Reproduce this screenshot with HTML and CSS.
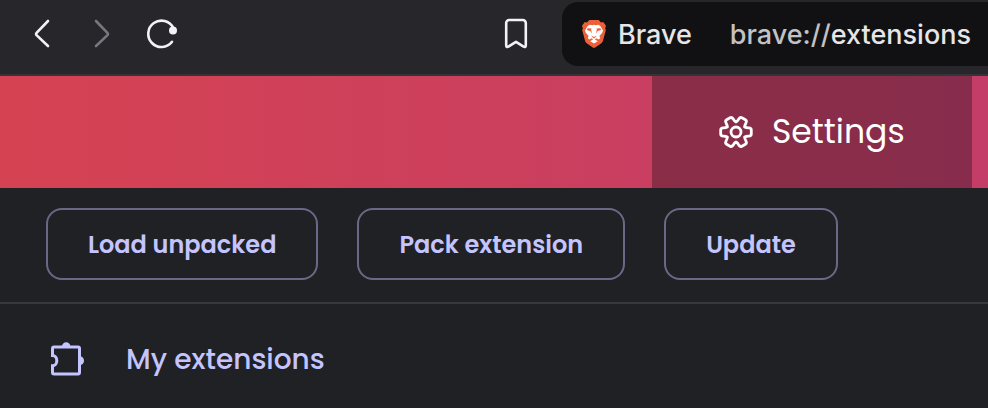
FILE: index.html
```html
<!DOCTYPE html>
<html lang="en">
<head>
<meta charset="utf-8">
<meta name="viewport" content="width=device-width, initial-scale=1">
<title>Extensions</title>
<link rel="stylesheet" href="styles.css">
</head>
<body>
<header class="browser-bar">
  <nav class="browser-nav" aria-label="Browser">
    <button class="icon-button" type="button" aria-label="Back">
      <svg width="36" height="36" viewBox="0 0 36 36"><path d="M24 5 12.8 16.6a2 2 0 0 0 0 2.8L24 30"/></svg>
    </button>
    <button class="icon-button" type="button" aria-label="Forward" disabled>
      <svg width="36" height="36" viewBox="0 0 36 36"><path d="m12 5 11.2 11.6a2 2 0 0 1 0 2.8L12 30"/></svg>
    </button>
    <button class="icon-button" type="button" aria-label="Reload">
      <svg width="36" height="36" viewBox="0 0 36 36"><path d="M29.3 12A13.2 13.2 0 1 0 28 25.8"/><circle class="dot" cx="29" cy="14.5" r="4"/></svg>
    </button>
  </nav>
  <button class="icon-button bookmark" type="button" aria-label="Bookmark">
    <svg width="36" height="36" viewBox="0 0 36 36"><path d="M8.2 7a3 3 0 0 1 3-3h13.6a3 3 0 0 1 3 3v22.6c0 1.5-1.2 1.8-2.2 1L18 25.8l-7.6 4.8c-1 .8-2.2.5-2.2-1Z"/></svg>
  </button>
  <div class="address">
    <svg class="lion" width="24" height="28" viewBox="0 0 24 28" aria-hidden="true">
      <path fill="#ec6039" d="M7.3 0h9.4L19 2.5l2.2-.4L24 5.700l-.8 2.500.6 2-3 11.100c-.3 1-1 1.700-1.800 2.300L13.200 27.500a2 2 0 0 1-2.400 0L5 23.600c-.8-.6-1.500-1.300-1.800-2.300L.2 10.200l.6-2L0 5.700l2.800-3.600 2.200.4Z"/>
      <path fill="#fff" d="m7.700 4.800 2.600.5 1.700-.5 1.700.5 2.600-.5 2 1.300 2.700 4.300-.8 2.400-2.800 3.200.8 2-1.400 1.500-2.600-1.200-1.200 1.200 2.800 1.700-2.600 1.500L12 23.500l-1.200-.8-2.600-1.500 2.800-1.700-1.200-1.200-2.600 1.200-1.400-1.500.8-2-2.800-3.200-.8-2.400 2.700-4.300Z"/>
      <path fill="#ec6039" d="m5.700 8.200 4.300.2-.9.700.8 4.500-1.700-2.500-3.500-1.100ZM18.300 8.200 14 8.400l.9.700-.8 4.500 1.700-2.500 3.500-1.100ZM9 15.500l3 1.500 3-1.500-2.400 2.700h-1.200Z"/>
    </svg>
    <span class="site">Brave</span>
    <span class="url"><span class="scheme">brave://</span>extensions</span>
  </div>
</header>
<div class="banner">
  <a class="settings" href="#settings">
    <svg width="36" height="36" viewBox="0 0 36 36" aria-hidden="true">
      <path id="tooth" d="M26.800 12.900Q28.200 14 30.800 13.900Q33.300 14.100 33.300 16V20Q33.300 21.900 30.800 22.100Q28.200 22 26.800 23.100"/>
      <use href="#tooth" transform="rotate(60 18 18)"/>
      <use href="#tooth" transform="rotate(120 18 18)"/>
      <use href="#tooth" transform="rotate(180 18 18)"/>
      <use href="#tooth" transform="rotate(240 18 18)"/>
      <use href="#tooth" transform="rotate(300 18 18)"/>
      <circle cx="18" cy="18" r="5"/>
    </svg>
    <span>Settings</span>
  </a>
</div>
<div class="toolbar">
  <button class="action" type="button">Load unpacked</button>
  <button class="action" type="button">Pack extension</button>
  <button class="action" type="button">Update</button>
</div>
<main class="menu">
  <a class="menu-item" href="#extensions">
    <svg width="36" height="36" viewBox="0 0 36 36" aria-hidden="true">
      <path d="M6 5h24a1.500 1.500 0 0 1 1.500 1.500v24A1.500 1.500 0 0 1 30 32H6a1.500 1.500 0 0 1-1.500-1.500v-6.700c2.600 0 4.300-2.200 4.300-5.100s-1.700-5.100-4.300-5.100V6.500A1.500 1.500 0 0 1 6 5Z"/>
      <path class="tab" d="M14 4.500a4.200 4.200 0 0 1 8.400 0ZM31.500 14.300c2.700 0 4.500 1.800 4.500 4.400s-1.800 4.400-4.500 4.400Z"/>
    </svg>
    <span>My extensions</span>
  </a>
</main>
</body>
</html>
```

FILE: styles.css
```css
* {
  box-sizing: border-box;
}

body {
  margin: 0;
  min-height: 100vh;
  background: #202124;
  color: #c4c4ff;
  font-family: Poppins, Inter, sans-serif;
}

button {
  font-family: inherit;
  cursor: pointer;
}

svg {
  display: block;
  flex: none;
}

.browser-bar {
  display: flex;
  align-items: flex-start;
  justify-content: space-between;
  height: 76px;
  padding: 2px 0 0 24px;
  background: #26262b;
  border-bottom: 2px solid #333338;
  font-family: Inter, sans-serif;
}

.browser-nav {
  display: flex;
  gap: 24px;
}

.icon-button {
  display: flex;
  align-items: center;
  height: 64px;
  padding: 0;
  border: 0;
  background: none;
  color: #f3f3f6;
}

.icon-button:disabled {
  color: #77777e;
}

.icon-button path {
  fill: none;
  stroke: currentColor;
  stroke-width: 2.6;
  stroke-linecap: round;
  stroke-linejoin: round;
}

.dot {
  fill: currentColor;
}

.bookmark {
  margin-left: auto;
  margin-right: 28px;
}

.address {
  display: flex;
  align-items: center;
  height: 64px;
  padding: 0 17px 0 20px;
  border-radius: 16px 0 0 16px;
  background: #111113;
  color: #e6e6e8;
  font-size: 27px;
  font-weight: 500;
  white-space: nowrap;
}

.site {
  margin-left: 12px;
}

.url {
  margin-left: 38px;
}

.scheme {
  color: #c2c2c5;
}

.banner {
  display: flex;
  justify-content: flex-end;
  height: 112px;
  padding-right: 16px;
  background: linear-gradient(90deg, #d54252, #c33d68);
}

.settings {
  display: flex;
  align-items: center;
  gap: 18px;
  min-width: 320px;
  padding: 0 66px;
  background: rgba(32, 17, 30, 0.37);
  color: #fff;
  font-size: 33px;
  text-decoration: none;
}

.settings svg {
  fill: none;
  stroke: currentColor;
  stroke-width: 2.8;
  stroke-linecap: round;
}

.toolbar {
  display: flex;
  gap: 39px;
  padding: 20px 46px 22px;
  border-bottom: 2px solid #38393b;
}

.action {
  height: 72px;
  padding: 0 40px;
  border: 2px solid #696987;
  border-radius: 16px;
  background: none;
  color: #c4c4ff;
  font-size: 24px;
  font-weight: 600;
  white-space: nowrap;
}

.menu {
  padding: 35px 48px;
}

.menu-item {
  display: flex;
  align-items: center;
  gap: 42px;
  color: #c4c4ff;
  font-size: 28px;
  font-weight: 500;
  text-decoration: none;
}

.menu-item path {
  fill: none;
  stroke: currentColor;
  stroke-width: 3;
}

.menu-item .tab {
  fill: currentColor;
  stroke: none;
}
```
